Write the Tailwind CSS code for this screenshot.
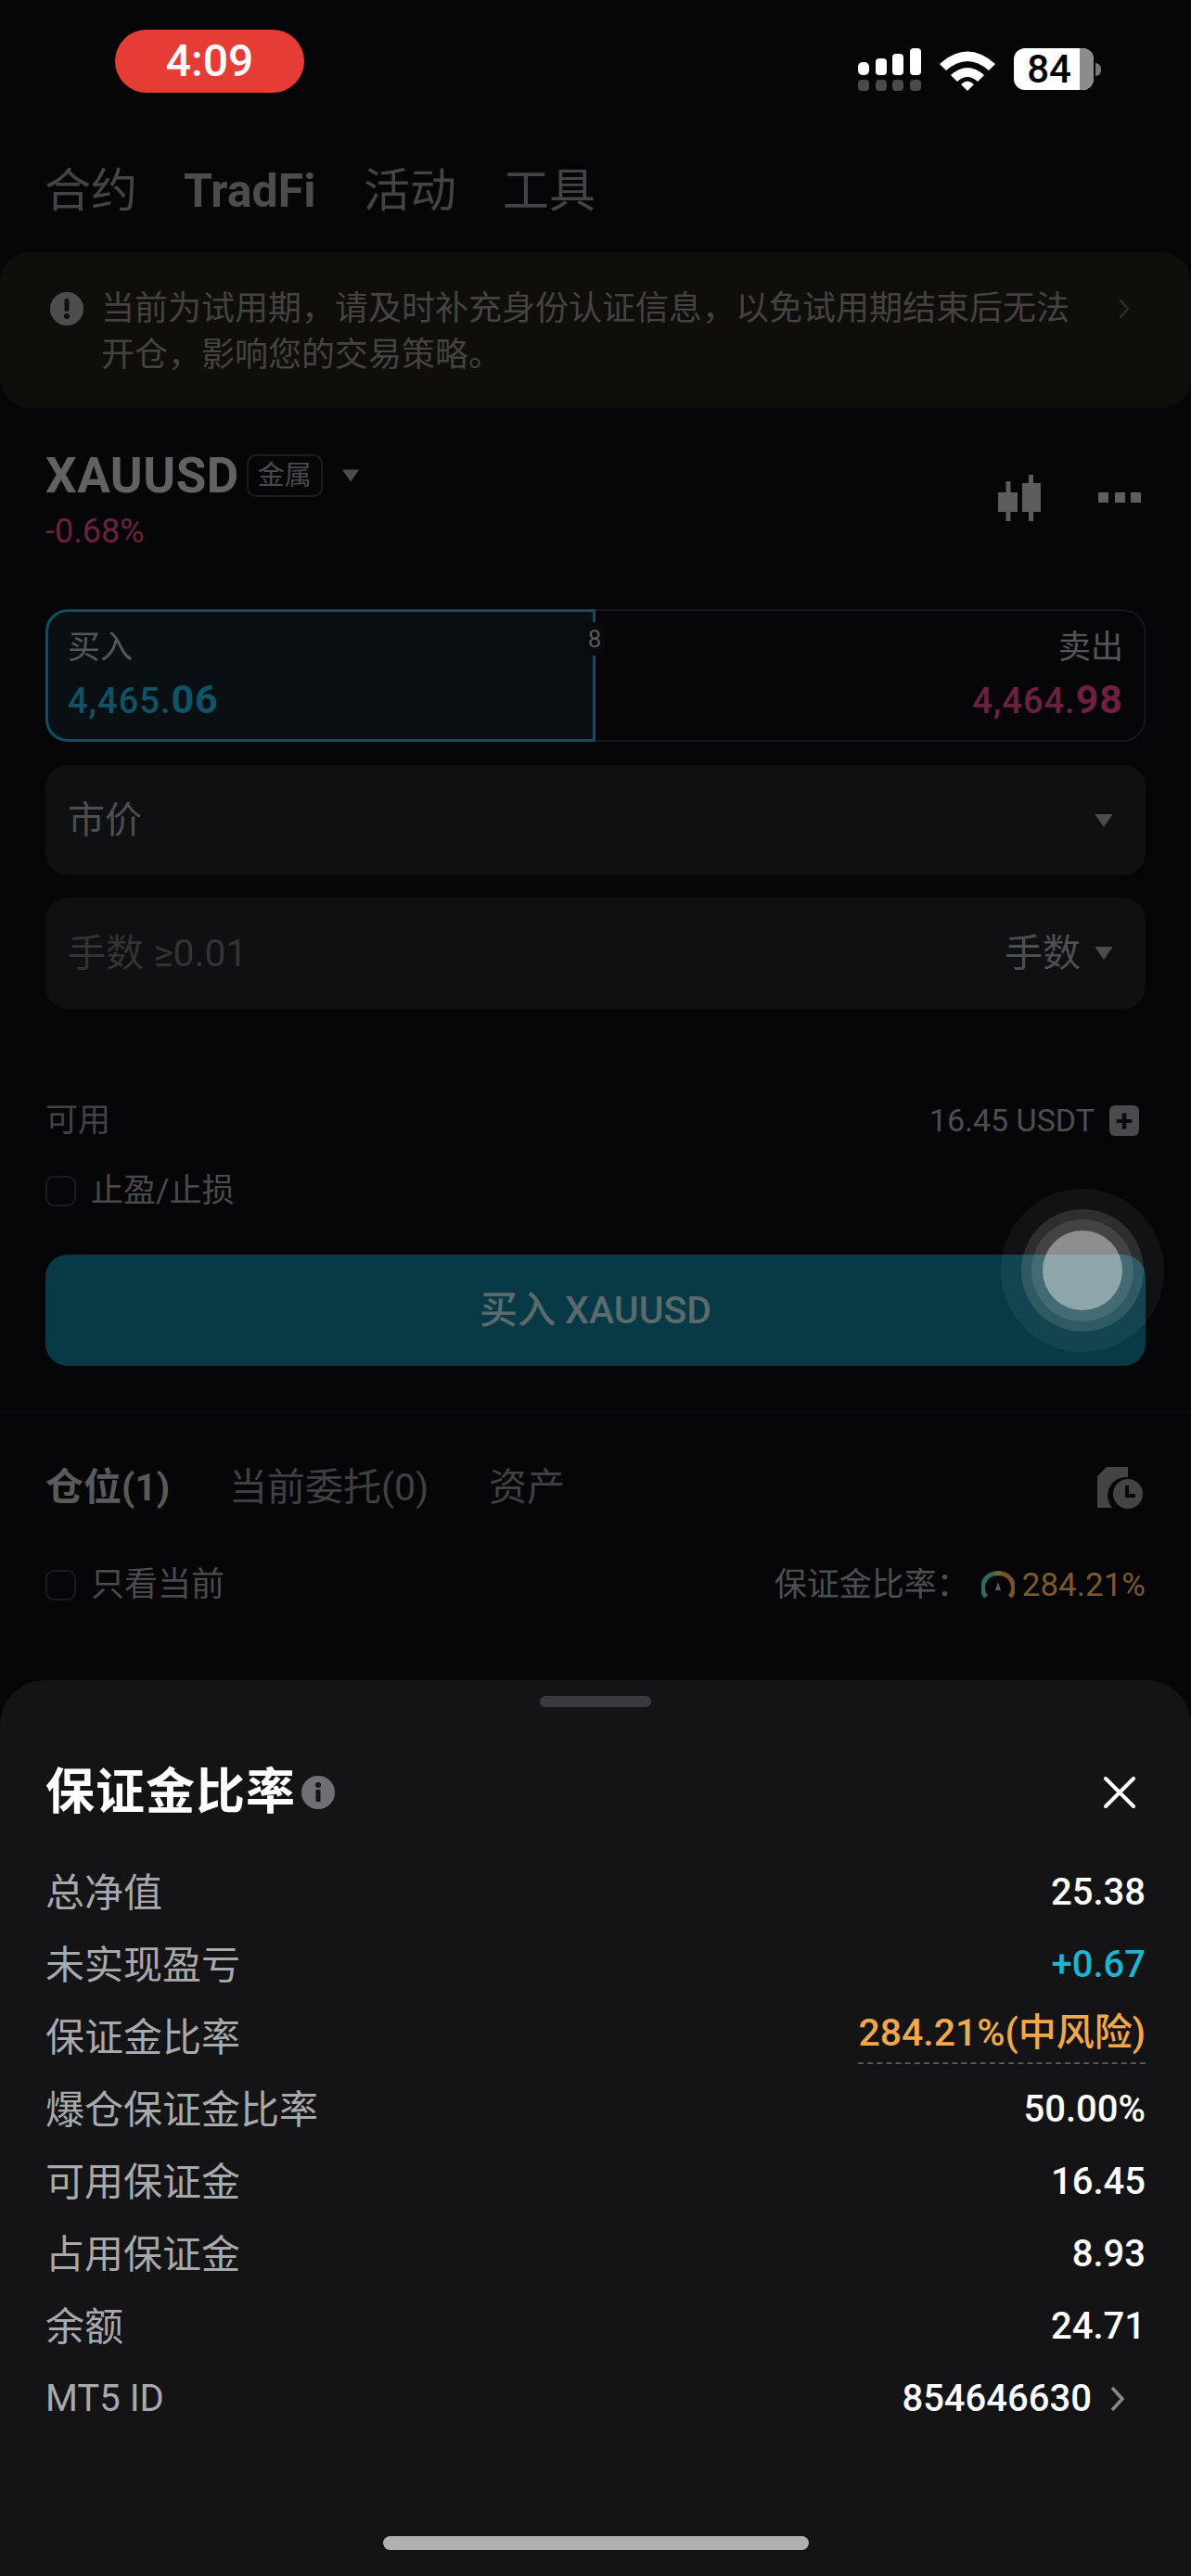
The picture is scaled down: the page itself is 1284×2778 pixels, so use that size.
<!DOCTYPE html>
<html lang="zh">
<head>
<meta charset="utf-8">
<script src="https://cdn.jsdelivr.net/npm/@tailwindcss/browser@4"></script>
</head>
<body class="m-0 bg-[#060609]">
<div class="relative w-[1284px] h-[2778px] overflow-hidden bg-[#060609] font-['Roboto','Noto_Sans_CJK_SC',sans-serif]">

  <!-- status bar -->
  <div class="flex items-start justify-between h-[176px] pl-[124px] pr-[97px] pt-[32px]">
    <div class="flex items-center justify-center w-[204px] h-[68px] rounded-[34px] bg-[#e53d35] text-white text-[48px] leading-none font-medium">4:09</div>
    <div class="flex items-start gap-[20px] pt-[20px]">
      <svg class="w-[68px] h-[46px]" viewBox="0 0 68 46">
        <rect x="0" y="15" width="12" height="14" rx="5" fill="#fff"/><rect x="19" y="11" width="12" height="18" rx="4" fill="#fff"/><rect x="37" y="6" width="12" height="23" rx="4" fill="#fff"/><rect x="56" y="0" width="12" height="29" rx="4" fill="#fff"/>
        <rect x="0" y="34" width="12" height="12" rx="4" fill="#4a4a4a"/><rect x="19" y="34" width="12" height="12" rx="4" fill="#4a4a4a"/><rect x="37" y="34" width="12" height="12" rx="4" fill="#4a4a4a"/><rect x="56" y="34" width="12" height="12" rx="4" fill="#4a4a4a"/>
      </svg>
      <svg class="w-[60px] h-[46px]" viewBox="0 0 60 46">
        <path d="M0 17 Q30 -10 60 17 L53 24 Q30 4 7 24Z" fill="#fff"/>
        <path d="M12 29 Q30 13 48 29 L41 36 Q30 26 19 36Z" fill="#fff"/>
        <path d="M23 39 Q30 32 37 39 L30 46Z" fill="#fff"/>
      </svg>
      <div class="flex items-center">
        <div class="relative flex items-center justify-center w-[86px] h-[45px] rounded-[12px] bg-white">
          <div class="absolute right-0 top-0 bottom-0 w-[15px] rounded-r-[12px] bg-[#8c8c8c]"></div>
          <span class="relative pr-[10px] text-black text-[42px] leading-[45px] font-medium">84</span>
        </div>
        <div class="ml-[2px] w-[6px] h-[14px] rounded-r-full bg-[#777]"></div>
      </div>
    </div>
  </div>

  <!-- top tabs -->
  <div class="flex items-center h-[60px] pl-[48px] text-[#444446] text-[50px] leading-none">
    <span class="w-[150px]">合约</span>
    <span class="w-[194px] font-bold text-[#4c4c4e] text-[50px]">TradFi</span>
    <span class="w-[150px]">活动</span>
    <span>工具</span>
  </div>

  <!-- banner -->
  <div class="mt-[36px] flex h-[168px] rounded-[32px] bg-[#100e0b] pl-[54px] pr-[60px] pt-[36px]">
    <svg class="w-[36px] h-[36px] mt-[7px] shrink-0" viewBox="0 0 36 36"><circle cx="18" cy="18" r="18" fill="#4d4d4f"/><rect x="15.5" y="7" width="5" height="14" rx="2" fill="#100e0b"/><circle cx="18" cy="26" r="3" fill="#100e0b"/></svg>
    <p class="ml-[19px] w-[1050px] text-[36px] leading-[50px] text-[#444341]">当前为试用期，请及时补充身份认证信息，以免试用期结束后无法开仓，影响您的交易策略。</p>
    <svg class="w-[14px] h-[24px] ml-[46px] mt-[13px] shrink-0" viewBox="0 0 14 24"><path d="M2 2 L11 12 L2 22" fill="none" stroke="#2e2d2b" stroke-width="2.5"/></svg>
  </div>

  <!-- symbol -->
  <div class="px-[49px]">
    <div class="flex justify-between pt-[48px] h-[217px]">
      <div>
        <div class="flex items-center h-[50px]">
          <span class="text-[53px] leading-none font-bold text-[#626264] tracking-[0.5px]">XAUUSD</span>
          <span class="ml-[8px] flex items-center justify-center w-[82px] h-[46px] rounded-[10px] border-2 border-[#1d1d20] text-[#4a4a4c] text-[29px] leading-none">金属</span>
          <svg class="ml-[21px] w-[18px] h-[14px]" viewBox="0 0 22 16"><path d="M0 0H22L11 16Z" fill="#4c4c4e"/></svg>
        </div>
        <div class="mt-[15px] text-[36px] leading-[40px] text-[#6d2140]">-0.68%</div>
      </div>
      <div class="flex items-start gap-[61px] pt-[24px] pr-[5px]">
        <svg class="w-[47px] h-[50px]" viewBox="0 0 47 50"><path d="M8.5 7H13.5V19H21V40H13.5V50H8.5V40H0V19H8.5Z M33 0H38V9H46V40H38V50H33V40H26V9H33Z" fill="#5c5c5e"/></svg>
        <svg class="mt-[19px] w-[46px] h-[11px]" viewBox="0 0 46 11"><rect width="11" height="11" fill="#5f5f61"/><rect x="18" width="11" height="11" fill="#5f5f61"/><rect x="35" width="11" height="11" fill="#5f5f61"/></svg>
      </div>
    </div>

    <!-- buy / sell -->
    <div class="relative flex h-[143px]">
      <div class="w-[593px] rounded-l-[24px] border-[3px] border-[#0e4f5f] bg-[#0a0f14] pl-[21px] pt-[19px]">
        <div class="text-[35px] leading-[40px] text-[#565658]">买入</div>
        <div class="mt-[13px] text-[#0e5466] text-[38px] leading-[44px] font-medium tracking-[1px]">4,465.<span class="text-[43px] font-bold">06</span></div>
      </div>
      <div class="flex-1 rounded-r-[24px] border-2 border-l-0 border-[#17171b] pr-[22px] pt-[20px] text-right">
        <div class="text-[35px] leading-[40px] text-[#565658]">卖出</div>
        <div class="mt-[13px] text-[#6d2140] text-[38px] leading-[44px] font-medium tracking-[1px]">4,464.<span class="text-[43px] font-bold">98</span></div>
      </div>
      <div class="absolute left-[581px] top-[14px] flex items-center justify-center w-[22px] h-[36px] rounded-[6px] bg-[#0a0a0d] text-[#5a5a5c] text-[26px] leading-none">8</div>
    </div>

    <!-- market -->
    <div class="mt-[25px] flex items-center justify-between h-[119px] rounded-[24px] bg-[#0f1012] pl-[24px] pr-[35px]">
      <span class="text-[40px] leading-none text-[#4e4e50]">市价</span>
      <svg class="w-[20px] h-[14px]" viewBox="0 0 22 16"><path d="M0 0H22L11 16Z" fill="#4c4c4e"/></svg>
    </div>

    <!-- lots -->
    <div class="mt-[24px] flex items-center justify-between h-[120px] rounded-[24px] bg-[#0f1012] pl-[24px] pr-[35px]">
      <span class="text-[41px] leading-none text-[#333335]">手数 ≥0.01</span>
      <span class="flex items-center gap-[15px] text-[41px] leading-none text-[#4e4e50]">手数<svg class="w-[20px] h-[14px]" viewBox="0 0 22 16"><path d="M0 0H22L11 16Z" fill="#4c4c4e"/></svg></span>
    </div>

    <!-- available -->
    <div class="mt-[99px] flex items-center justify-between h-[42px] pr-[7px]">
      <span class="text-[35px] leading-none text-[#434345]">可用</span>
      <span class="flex items-center gap-[16px] text-[34px] leading-none text-[#4e4e50]">16.45 USDT<span class="flex items-center justify-center w-[32px] h-[33px] rounded-[6px] bg-[#4a4a4c] text-[#0a0a0d] text-[34px] leading-none font-bold">+</span></span>
    </div>

    <div class="mt-[35px] flex items-center gap-[16px] h-[40px]">
      <span class="w-[33px] h-[33px] rounded-[9px] border-2 border-[#1c1c20]"></span>
      <span class="text-[35px] leading-none text-[#4a4a4c]">止盈/止损</span>
    </div>

    <!-- buy button -->
    <div class="mt-[49px] flex items-center justify-center h-[120px] rounded-[24px] bg-[#073a46] text-[41px] leading-none font-medium text-[#5b6a6d]">买入 XAUUSD</div>
  </div>

  <div class="mt-[48px] h-[2px] bg-[#0b0b0f]"></div>

  <!-- position tabs -->
  <div class="px-[49px]">
    <div class="mt-[54px] flex items-center justify-between h-[54px]">
      <div class="flex items-center text-[41px] leading-none text-[#404042]">
        <span class="w-[198px] font-bold text-[#5a5a5c]">仓位(1)</span>
        <span class="w-[280px]">当前委托(0)</span>
        <span>资产</span>
      </div>
      <svg class="w-[52px] h-[46px]" viewBox="0 0 52 46"><path d="M10 1H33V12 A20 20 0 0 0 16 45H0V11Z" fill="#444446"/><circle cx="33" cy="30" r="16" fill="#444446"/><path d="M32 21V32H41" fill="none" stroke="#060609" stroke-width="4"/></svg>
    </div>

    <div class="mt-[56px] flex items-center justify-between h-[44px]">
      <div class="flex items-center gap-[16px]">
        <span class="w-[33px] h-[33px] rounded-[9px] border-2 border-[#1c1c20]"></span>
        <span class="text-[36px] leading-none text-[#4a4a4c]">只看当前</span>
      </div>
      <div class="flex items-center text-[35px] leading-none">
        <span class="w-[223px] text-[#4e4e50]">保证金比率：</span>
        <svg class="w-[36px] h-[32px]" viewBox="0 0 36 32">
          <path d="M5 29 A15.5 15.5 0 0 1 14 4" fill="none" stroke="#2f6a5e" stroke-width="5"/>
          <path d="M14 4 A15.5 15.5 0 0 1 22 4" fill="none" stroke="#6d6a3a" stroke-width="5"/>
          <path d="M22 4 A15.5 15.5 0 0 1 31 29" fill="none" stroke="#7a4f2c" stroke-width="5"/>
          <path d="M18 13 L21 22 H15Z" fill="#55606a"/>
        </svg>
        <span class="ml-[8px] text-[#7a5a2f]">284.21%</span>
      </div>
    </div>
  </div>

  <!-- assistive touch -->
  <div class="absolute left-[1079px] top-[1282px] flex items-center justify-center w-[176px] h-[176px] rounded-full bg-white/5">
    <div class="flex items-center justify-center w-[132px] h-[132px] rounded-full bg-white/12">
      <div class="flex items-center justify-center w-[110px] h-[110px] rounded-full bg-white/10">
        <div class="w-[86px] h-[86px] rounded-full bg-white/40"></div>
      </div>
    </div>
  </div>

  <!-- bottom sheet -->
  <div class="absolute left-0 right-0 bottom-0 h-[966px] rounded-t-[48px] bg-[#141417] px-[49px]">
    <div class="mx-auto mt-[17px] w-[120px] h-[12px] rounded-full bg-[#3a3b40]"></div>
    <div class="mt-[53px] flex items-center justify-between h-[78px]">
      <div class="flex items-center gap-[6px]">
        <span class="text-[53px] leading-none font-bold text-white tracking-[1px]">保证金比率</span>
        <svg class="w-[36px] h-[36px]" viewBox="0 0 36 36"><circle cx="18" cy="18" r="18" fill="#6f7075"/><circle cx="18" cy="10" r="3" fill="#141417"/><rect x="15.5" y="15" width="5" height="13" fill="#141417"/></svg>
      </div>
      <svg class="mr-[11px] w-[34px] h-[34px]" viewBox="0 0 34 34"><path d="M2 2 L32 32 M32 2 L2 32" stroke="#fff" stroke-width="4" stroke-linecap="round"/></svg>
    </div>
    <div class="mt-[30px] flex flex-col text-[40px] text-[#a9a9ab]">
      <div class="flex items-center justify-between h-[78px]"><span class="text-[42px]">总净值</span><span class="font-medium text-white">25.38</span></div>
      <div class="flex items-center justify-between h-[78px]"><span class="text-[42px]">未实现盈亏</span><span class="font-medium text-[#1bb5d0]">+0.67</span></div>
      <div class="flex items-center justify-between h-[78px]"><span class="text-[42px]">保证金比率</span><span class="h-[58px] text-[41px] leading-[48px] font-medium border-b-2 border-dashed border-[#55565a] text-[#f0a84a]">284.21%(中风险)</span></div>
      <div class="flex items-center justify-between h-[78px]"><span class="text-[42px]">爆仓保证金比率</span><span class="font-medium text-white">50.00%</span></div>
      <div class="flex items-center justify-between h-[78px]"><span class="text-[42px]">可用保证金</span><span class="font-medium text-white">16.45</span></div>
      <div class="flex items-center justify-between h-[78px]"><span class="text-[42px]">占用保证金</span><span class="font-medium text-white">8.93</span></div>
      <div class="flex items-center justify-between h-[78px]"><span class="text-[42px]">余额</span><span class="font-medium text-white">24.71</span></div>
      <div class="flex items-center justify-between h-[78px]"><span>MT5 ID</span><span class="flex items-center gap-[20px] font-medium text-white">854646630<svg class="mr-[22px] w-[16px] h-[28px]" viewBox="0 0 16 28"><path d="M2 2 L13 14 L2 26" fill="none" stroke="#8a8a8c" stroke-width="3.5"/></svg></span></div>
    </div>
    <div class="absolute left-[413px] top-[923px] w-[459px] h-[15px] rounded-full bg-[#b0b0b0]"></div>
  </div>
</div>
</body>
</html>
